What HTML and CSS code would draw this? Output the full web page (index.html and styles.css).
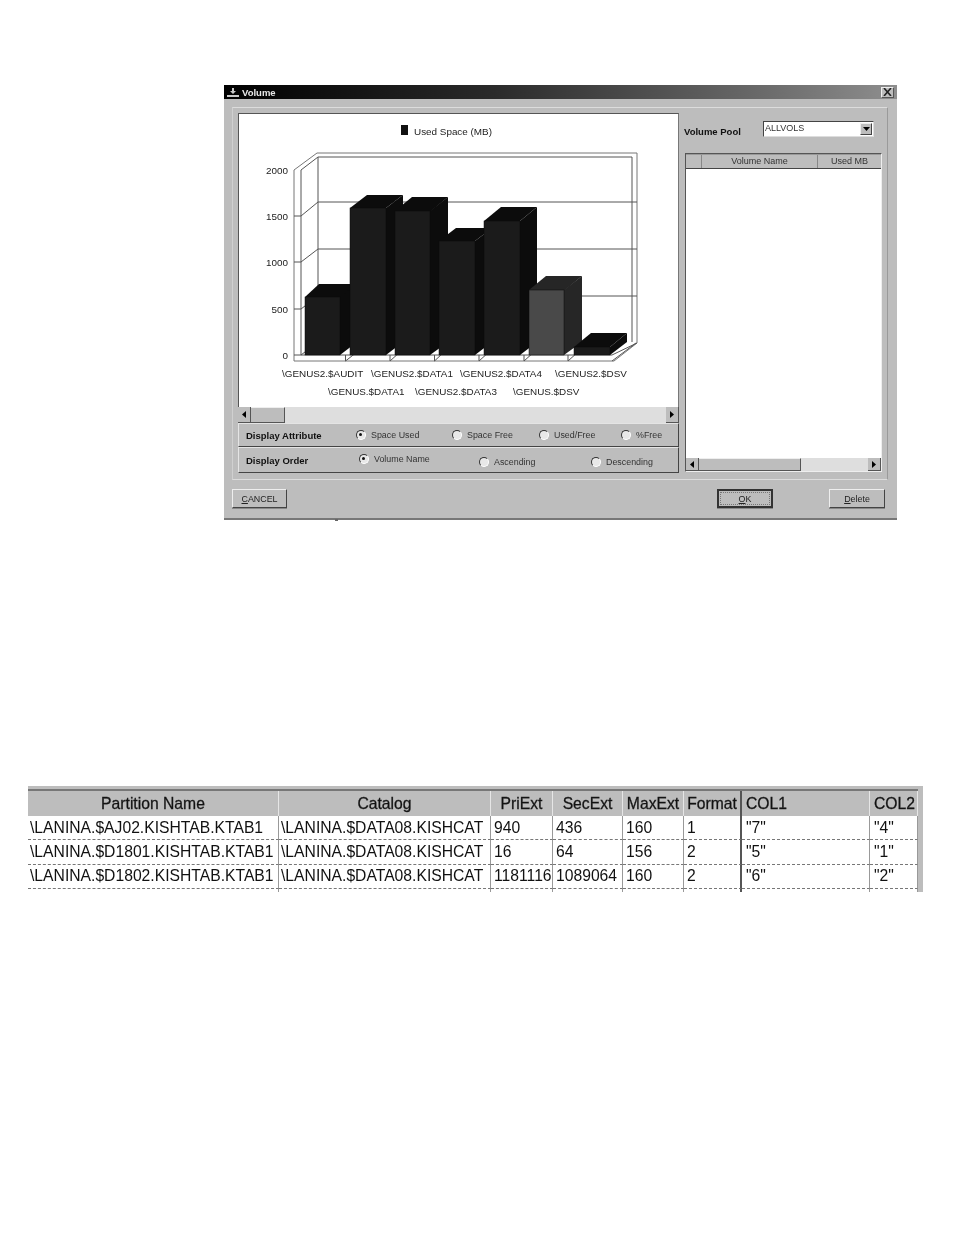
FILE: index.html
```html
<!DOCTYPE html>
<html lang="en">
<head>
<meta charset="utf-8">
<title>Volume</title>
<link rel="stylesheet" href="styles.css">
</head>
<body>
<section class="dialog">
  <header class="titlebar">
    <svg class="title-icon" width="12" height="10" viewBox="0 0 12 10"><path d="M5 1h2v4H5zM3 4h6L6 7zM0 8h12v2H0z" fill="#c8c8c8"/></svg>
    <span class="title-text">Volume</span>
    <span class="close"><svg width="9" height="8" viewBox="0 0 9 8"><path d="M1 0l7 8M8 0L1 8" stroke="#222" stroke-width="1.6"/></svg></span>
  </header>
  <div class="group">
    <div class="left">
      <div class="chart">
        <svg class="chart-svg" width="440" height="294" viewBox="238 113 440 294">
          <rect x="401" y="125" width="7" height="10" fill="#111"/>
          <text class="c-text" x="414" y="135">Used Space (MB)</text>
          <g class="frame">
            <path d="M294 170L317 153H637V343L614 361H294Z"/>
            <path d="M301 170V355H612L637 343M318 157H632V342M318 157V342M301 170L318 157"/>
            <path d="M318 202H637M318 249H637M318 296H637"/>
            <path d="M301 216L318 202M301 262L318 249M301 309L318 296M301 355L318 342"/>
            <path d="M294 216H301M294 262H301M294 309H301M294 355H301"/>
            <path d="M345.500 355V361M390 355V361M434.500 355V361M479 355V361M524 355V361M568 355V361"/>
            <path d="M345.500 361L357 352M390 361L400 352M434.500 361L444 352M479 361L489 352M524 361L534 352M568 361L578 352M612 361L636 343"/>
          </g>
          <g class="bar">
            <path class="top" d="M305 297L319 284H357L343 297Z"/><path class="side" d="M340 297L357 284V342L340 355Z"/><rect class="front" x="305" y="297" width="35" height="58"/>
          </g>
          <g class="bar">
            <path class="top" d="M350 208L367 195H403L386 208Z"/><path class="side" d="M386 208L403 195V342L386 355Z"/><rect class="front" x="350" y="208" width="36" height="147"/>
          </g>
          <g class="bar">
            <path class="top" d="M395 211L412 197H448L431 211Z"/><path class="side" d="M430 211L448 197V342L430 355Z"/><rect class="front" x="395" y="211" width="35" height="144"/>
          </g>
          <g class="bar">
            <path class="top" d="M439 241L456 228H492L475 241Z"/><path class="side" d="M475 241L492 228V342L475 355Z"/><rect class="front" x="439" y="241" width="36" height="114"/>
          </g>
          <g class="bar">
            <path class="top" d="M484 221L501 207H537L520 221Z"/><path class="side" d="M520 221L537 207V342L520 355Z"/><rect class="front" x="484" y="221" width="36" height="134"/>
          </g>
          <g class="bar light">
            <path class="top" d="M529 290L546 276H582L565 290Z"/><path class="side" d="M564 290L582 276V342L564 355Z"/><rect class="front" x="529" y="290" width="35" height="65"/>
          </g>
          <g class="bar">
            <path class="top" d="M574 347L591 333H627L610 347Z"/><path class="side" d="M610 347L627 333V342L610 355Z"/><rect class="front" x="574" y="347" width="36" height="8"/>
          </g>
          <g class="c-text y-axis">
            <text x="288" y="174">2000</text>
            <text x="288" y="220">1500</text>
            <text x="288" y="266">1000</text>
            <text x="288" y="313">500</text>
            <text x="288" y="359">0</text>
          </g>
          <g class="c-text">
            <text x="282" y="377">\GENUS2.$AUDIT</text>
            <text x="371" y="377">\GENUS2.$DATA1</text>
            <text x="460" y="377">\GENUS2.$DATA4</text>
            <text x="555" y="377">\GENUS2.$DSV</text>
            <text x="328" y="395">\GENUS.$DATA1</text>
            <text x="415" y="395">\GENUS2.$DATA3</text>
            <text x="513" y="395">\GENUS.$DSV</text>
          </g>
        </svg>
      </div>
      <div class="hscroll">
        <span class="arrow"><svg width="5" height="7" viewBox="0 0 5 7"><path d="M4 0v7L0 3.500z" fill="#000"/></svg></span>
        <span class="thumb chart-thumb"></span>
        <span class="track"></span>
        <span class="arrow"><svg width="5" height="7" viewBox="0 0 5 7"><path d="M0 0v7l4-3.500z" fill="#000"/></svg></span>
      </div>
      <div class="opt-row attr-row">
        <strong class="opt-label label-attr">Display Attribute</strong>
        <label class="opt w96"><i class="radio on"></i>Space Used</label>
        <label class="opt w87"><i class="radio"></i>Space Free</label>
        <label class="opt w82"><i class="radio"></i>Used/Free</label>
        <label class="opt"><i class="radio"></i>%Free</label>
      </div>
      <div class="opt-row order-row">
        <strong class="opt-label label-order">Display Order</strong>
        <label class="opt w120 raised"><i class="radio on"></i>Volume Name</label>
        <label class="opt w112 lowered"><i class="radio"></i>Ascending</label>
        <label class="opt lowered"><i class="radio"></i>Descending</label>
      </div>
    </div>
    <div class="right">
      <div class="pool">
        <strong class="pool-label">Volume Pool</strong>
        <div class="select">
          <span class="select-value">ALLVOLS</span>
          <span class="select-btn"><svg width="7" height="4" viewBox="0 0 7 4"><path d="M0 0h7L3.500 4z" fill="#000"/></svg></span>
        </div>
      </div>
      <div class="list">
        <div class="list-head">
          <span class="lh lh-a"></span>
          <span class="lh lh-b">Volume Name</span>
          <span class="lh lh-c">Used MB</span>
        </div>
        <div class="list-body"></div>
        <div class="hscroll list-scroll">
          <span class="arrow"><svg width="5" height="7" viewBox="0 0 5 7"><path d="M4 0v7L0 3.500z" fill="#000"/></svg></span>
          <span class="thumb list-thumb"></span>
          <span class="track"></span>
          <span class="arrow"><svg width="5" height="7" viewBox="0 0 5 7"><path d="M0 0v7l4-3.500z" fill="#000"/></svg></span>
        </div>
      </div>
    </div>
  </div>
  <footer class="footer">
    <button class="btn btn-cancel" type="button"><u>C</u>ANCEL</button>
    <button class="btn btn-ok" type="button"><u>O</u>K</button>
    <button class="btn btn-delete" type="button"><u>D</u>elete</button>
  </footer>
</section>
<div class="grid-wrap">
  <table class="grid">
    <colgroup>
      <col class="c1"><col class="c2"><col class="c3"><col class="c4"><col class="c5"><col class="c6"><col class="c7"><col class="c8">
    </colgroup>
    <thead>
      <tr><th>Partition Name</th><th>Catalog</th><th>PriExt</th><th>SecExt</th><th>MaxExt</th><th class="thick">Format</th><th class="left-th">COL1</th><th class="left-th">COL2</th></tr>
    </thead>
    <tbody>
      <tr><td>\LANINA.$AJ02.KISHTAB.KTAB1</td><td>\LANINA.$DATA08.KISHCAT</td><td>940</td><td>436</td><td>160</td><td class="thick">1</td><td>"7"</td><td>"4"</td></tr>
      <tr><td>\LANINA.$D1801.KISHTAB.KTAB1</td><td>\LANINA.$DATA08.KISHCAT</td><td>16</td><td>64</td><td>156</td><td class="thick">2</td><td>"5"</td><td>"1"</td></tr>
      <tr><td>\LANINA.$D1802.KISHTAB.KTAB1</td><td>\LANINA.$DATA08.KISHCAT</td><td>1181116</td><td>1089064</td><td>160</td><td class="thick">2</td><td>"6"</td><td>"2"</td></tr>
      <tr><td></td><td></td><td></td><td></td><td></td><td class="thick"></td><td></td><td></td></tr>
    </tbody>
  </table>
</div>
</body>
</html>
```
FILE: styles.css
```css
* { box-sizing: border-box; }
html, body { margin: 0; background: #fff; }
body { padding-top: 85px; height: 1235px; overflow: hidden; font-family: "Liberation Sans", Arial, sans-serif; }

.dialog {
  position: relative;
  width: 673px; height: 435px; margin-left: 224px;
  background: #bdbdbd; border-bottom: 2px solid #777;
  display: flex; flex-direction: column;
  filter: blur(0.7px); color: #333; font-size: 9px;
}
.dialog::after {
  content: ""; position: absolute; left: 111px; top: 434px; width: 3px; height: 2px; background: #666;
}
.titlebar {
  height: 14px; display: flex; align-items: center; padding: 0 3px;
  background: linear-gradient(90deg, #000 0%, #2a2a2a 40%, #6a6a6a 80%, #8e8e8e 100%);
}
.title-icon { margin-right: 3px; }
.title-text { color: #e8e8e8; font-weight: 700; font-size: 9.500px; flex: 1; }
.close {
  width: 13px; height: 11px; background: #bdbdbd; display: flex; align-items: center; justify-content: center;
  border: 1px solid; border-color: #eee #555 #555 #eee;
}
.group {
  width: 656px; height: 373px; margin: 8px 0 0 8px;
  border: 1px solid; border-color: #dcdcdc #9a9a9a #dcdcdc #d0d0d0;
  padding: 5px 0 0 5px; display: flex;
}
.left { width: 441px; display: flex; flex-direction: column; }
.chart { height: 294px; background: #fff; border: 1px solid #555; border-bottom: 0; border-right-color: #777; }
.chart-svg { display: block; margin: -1px 0 0 -1px; }
.c-text { font-size: 9.900px; fill: #222; font-family: "Liberation Sans", Arial, sans-serif; }
.y-axis { text-anchor: end; }
.frame path { fill: none; stroke: #555; stroke-width: 1; }
.frame path:first-child { fill: #fff; stroke: #777; }
.bar .front { fill: #1b1b1b; stroke: #0a0a0a; stroke-width: .5; }
.bar .side, .bar .top { fill: #0c0c0c; }
.bar.light .front { fill: #494949; }
.bar.light .side, .bar.light .top { fill: #262626; }

.hscroll { height: 16px; display: flex; background: #dedede; }
.arrow {
  width: 13px; background: #bdbdbd; display: flex; align-items: center; justify-content: center;
  border-right: 1px solid #555; border-bottom: 1px solid #555;
}
.thumb { background: #bdbdbd; border-right: 1px solid #555; border-bottom: 1px solid #555; border-top: 1px solid #eee; }
.chart-thumb { width: 34px; }
.track { flex: 1; }

.opt-row {
  display: flex; align-items: center; background: #bdbdbd; padding-left: 7px;
  border: 1px solid; border-color: #e4e4e4 #444 #444 #e4e4e4;
}
.attr-row { height: 24px; }
.order-row { height: 26px; }
.opt-label { color: #111; font-size: 9.500px; }
.label-attr { width: 110px; }
.label-order { width: 113px; }
.opt { display: flex; align-items: center; gap: 5px; color: #333; font-size: 8.900px; white-space: nowrap; }
.w96 { width: 96px; } .w87 { width: 87px; } .w82 { width: 82px; } .w120 { width: 120px; } .w112 { width: 112px; }
.raised { padding-bottom: 2px; }
.lowered { padding-top: 4px; }
.radio {
  width: 10px; height: 10px; border-radius: 50%; background: #e8e8e8; flex: none; position: relative;
  border: 1.500px solid; border-color: #333 #fff #fff #333;
}
.radio.on::after {
  content: ""; position: absolute; left: 2px; top: 2px; width: 3px; height: 3px; border-radius: 50%; background: #111;
}

.right { width: 198px; margin-left: 5px; display: flex; flex-direction: column; }
.pool { height: 40px; display: flex; align-items: flex-start; }
.pool-label { font-size: 9.500px; color: #111; width: 79px; margin-top: 13px; }
.select {
  width: 111px; height: 16px; margin-top: 8px; background: #fff; display: flex; justify-content: space-between;
  border: 1px solid; border-color: #444 #ddd #ddd #444; font-size: 9px; color: #333;
}
.select-value { padding-left: 1px; line-height: 12px; }
.select-btn {
  width: 12px; height: 12px; margin: 1px; background: #bdbdbd; display: flex; align-items: center; justify-content: center;
  border: 1px solid; border-color: #eee #444 #444 #eee;
}
.list {
  margin-left: 1px; width: 197px; height: 319px; background: #fff; display: flex; flex-direction: column;
  border: 1px solid; border-color: #555 #eee #eee #555;
}
.list-head { height: 15px; display: flex; background: #bdbdbd; border-top: 1px solid #999; border-bottom: 1px solid #444; font-size: 9px; color: #333; text-align: center; line-height: 12px; }
.lh { border-right: 1px solid #888; }
.lh-a { width: 16px; }
.lh-b { width: 116px; }
.lh-c { flex: 1; border-right: 0; }
.list-body { flex: 1; }
.list-scroll { height: 13px; }
.list-scroll .arrow { width: 13px; }
.list-thumb { width: 102px; }

.footer { flex: 1; display: flex; align-items: flex-start; padding: 9px 12px 0 8px; }
.btn {
  height: 19px; padding: 0; background: #bdbdbd; font: 8.900px "Liberation Sans", Arial, sans-serif; color: #222;
  border: 1px solid; border-color: #eee #444 #444 #eee; box-shadow: 0 1px 0 #888;
}
.btn-cancel { width: 55px; }
.btn-ok { width: 56px; margin-left: 430px; border: 2px solid #333; outline: 1px dotted #777; outline-offset: -4px; }
.btn-delete { width: 56px; margin-left: 56px; }

.grid-wrap {
  width: 895px; height: 106px; margin: 266px 0 0 28px; padding: 3px 5px 0 0; overflow: hidden;
  background: #bdbdbd; filter: blur(0.6px);
}
.grid {
  width: 890px; table-layout: fixed; border-collapse: separate; border-spacing: 0; background: #fff;
  font-size: 15.700px; color: #111; border-top: 2px solid #777;
}
.c1 { width: 251px; } .c2 { width: 212px; } .c3 { width: 62px; } .c4 { width: 70px; }
.c5 { width: 61px; } .c6 { width: 58px; } .c7 { width: 128px; } .c8 { width: 48px; }
th {
  height: 25px; padding: 0; background: #bdbdbd; font-weight: 400; text-align: center; white-space: nowrap;
  border-right: 1px solid #e6e6e6; -webkit-text-stroke: .3px #222;
}
.left-th { text-align: left; padding-left: 4px; }
td {
  height: 24.300px; padding: 0 0 0 2px; white-space: nowrap; overflow: hidden;
  border-right: 1px solid #999; border-bottom: 1px dashed #777;
}
td:nth-child(n+3) { padding-left: 3px; }
td:nth-child(n+7) { padding-left: 4px; }
.thick { border-right: 2px solid #555; }
```
